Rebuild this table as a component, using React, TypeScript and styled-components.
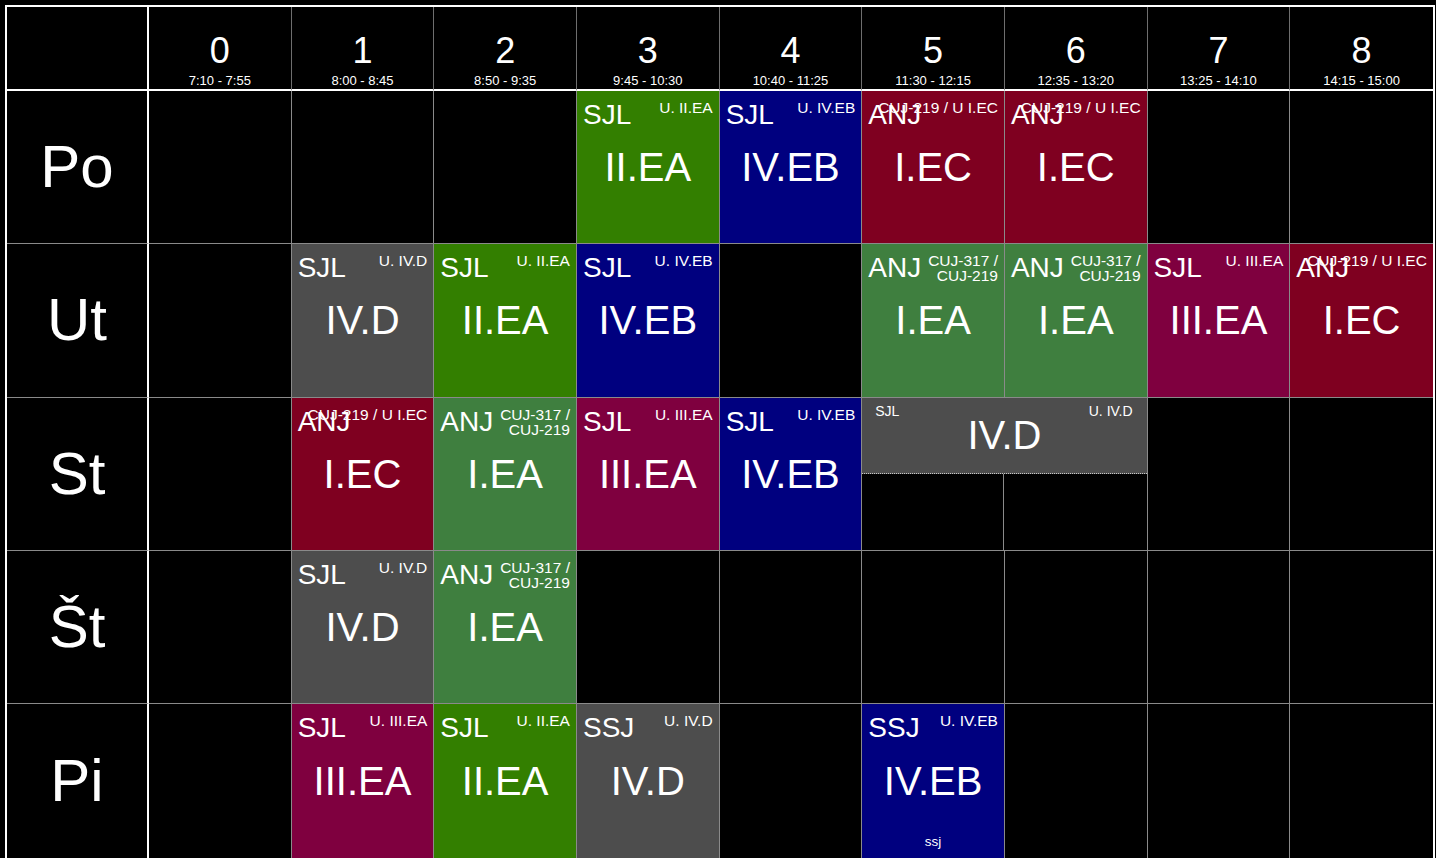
import React from "react";
import styled, { createGlobalStyle } from "styled-components";

const GlobalStyle = createGlobalStyle`
  html, body {
    margin: 0;
    padding: 0;
    background: #000;
    color: #fff;
    font-family: "Liberation Sans", Arial, sans-serif;
    overflow: hidden;
  }
`;

const LINE = "#8a8a8a";
const HEAD_LINE = "#6e6e6e";

const Table = styled.div`
  margin: 5px 0 0 5px;
  display: grid;
  grid-template-columns: 142px repeat(9, 142.67px);
  grid-template-rows: 84px repeat(5, 153.33px);
  border: 2px solid #fff;
  width: max-content;
  box-sizing: border-box;
`;

const Corner = styled.div`
  box-sizing: border-box;
  border-right: 2px solid #fff;
  border-bottom: 2px solid #fff;
`;

const HeadCell = styled.div<{ $last?: boolean }>`
  box-sizing: border-box;
  border-bottom: 2px solid #fff;
  border-right: ${(p) => (p.$last ? "none" : `1px solid ${HEAD_LINE}`)};
  display: flex;
  flex-direction: column;
  align-items: center;
  justify-content: flex-end;
  gap: 5px;
  padding-bottom: 2px;
`;

const PeriodNum = styled.div`
  font-size: 36px;
  line-height: 1;
`;

const PeriodTime = styled.div`
  font-size: 13px;
  line-height: 1;
`;

const DayCell = styled.div<{ $lastRow?: boolean }>`
  box-sizing: border-box;
  border-right: 2px solid #fff;
  border-bottom: ${(p) => (p.$lastRow ? "none" : `1px solid ${LINE}`)};
  display: flex;
  align-items: center;
  justify-content: center;
  font-size: 60px;
  line-height: 1;
`;

const Cell = styled.div<{ $lastCol?: boolean; $lastRow?: boolean; $span?: number }>`
  box-sizing: border-box;
  min-width: 0;
  border-right: ${(p) => (p.$lastCol ? "none" : `1px solid ${LINE}`)};
  border-bottom: ${(p) => (p.$lastRow ? "none" : `1px solid ${LINE}`)};
  grid-column: span ${(p) => p.$span ?? 1};
  display: grid;
`;

const SplitCell = styled(Cell)`
  grid-template-columns: 1fr 1fr;
  grid-template-rows: 1fr 1fr;
`;

const SubCell = styled.div<{ $divider?: boolean }>`
  border-right: ${(p) => (p.$divider ? `1px solid ${LINE}` : "none")};
`;

const LessonBox = styled.div<{ $bg: string; $half?: boolean }>`
  background: ${(p) => p.$bg};
  display: grid;
  grid-template: 1fr / 1fr;
  min-width: 0;
  grid-column: ${(p) => (p.$half ? "1 / -1" : "auto")};
  border-bottom: ${(p) => (p.$half ? "1px dotted #c8c8c8" : "none")};
  box-sizing: border-box;
`;

const Subject = styled.div<{ $small?: boolean }>`
  grid-area: 1 / 1;
  align-self: start;
  justify-self: start;
  margin: ${(p) => (p.$small ? "6px 0 0 13px" : "10px 0 0 6px")};
  font-size: ${(p) => (p.$small ? "14px" : "28px")};
  line-height: 1;
  white-space: nowrap;
`;

const Room = styled.div<{ $small?: boolean }>`
  grid-area: 1 / 1;
  align-self: start;
  justify-self: end;
  margin: ${(p) => (p.$small ? "6px 14px 0 0" : "9px 6px 0 0")};
  font-size: ${(p) => (p.$small ? "14px" : "15.5px")};
  line-height: ${(p) => (p.$small ? "14px" : "15px")};
  text-align: right;
  max-width: 126px;
`;

const Word = styled.span`
  white-space: nowrap;
`;

const ClassName = styled.div`
  grid-area: 1 / 1;
  align-self: center;
  justify-self: center;
  font-size: 40px;
  line-height: 1;
  white-space: nowrap;
`;

const Note = styled.div`
  grid-area: 1 / 1;
  align-self: end;
  justify-self: center;
  margin-bottom: 9px;
  font-size: 13.5px;
  line-height: 1;
`;

type Lesson = { subj: string; cls: string; room: string; bg: string; note?: string };
type Slot = null | { lesson: Lesson; split?: boolean };

const COL = {
  green: "#337f00",
  navy: "#00007f",
  red: "#7f0020",
  gray: "#4d4d4d",
  sea: "#3f7f3f",
  plum: "#7f003f",
};

const L = {
  sjlIIEA: { subj: "SJL", cls: "II.EA", room: "U. II.EA", bg: COL.green },
  sjlIVEB: { subj: "SJL", cls: "IV.EB", room: "U. IV.EB", bg: COL.navy },
  anjIEC: { subj: "ANJ", cls: "I.EC", room: "CUJ-219 / U I.EC", bg: COL.red },
  sjlIVD: { subj: "SJL", cls: "IV.D", room: "U. IV.D", bg: COL.gray },
  anjIEA: { subj: "ANJ", cls: "I.EA", room: "CUJ-317 / CUJ-219", bg: COL.sea },
  sjlIIIEA: { subj: "SJL", cls: "III.EA", room: "U. III.EA", bg: COL.plum },
  ssjIVD: { subj: "SSJ", cls: "IV.D", room: "U. IV.D", bg: COL.gray },
  ssjIVEB: { subj: "SSJ", cls: "IV.EB", room: "U. IV.EB", bg: COL.navy, note: "ssj" },
};

const periods = [
  ["0", "7:10 - 7:55"],
  ["1", "8:00 - 8:45"],
  ["2", "8:50 - 9:35"],
  ["3", "9:45 - 10:30"],
  ["4", "10:40 - 11:25"],
  ["5", "11:30 - 12:15"],
  ["6", "12:35 - 13:20"],
  ["7", "13:25 - 14:10"],
  ["8", "14:15 - 15:00"],
];

const s = (lesson: Lesson): Slot => ({ lesson });

const days: { name: string; slots: Slot[] }[] = [
  {
    name: "Po",
    slots: [null, null, null, s(L.sjlIIEA), s(L.sjlIVEB), s(L.anjIEC), s(L.anjIEC), null, null],
  },
  {
    name: "Ut",
    slots: [null, s(L.sjlIVD), s(L.sjlIIEA), s(L.sjlIVEB), null, s(L.anjIEA), s(L.anjIEA), s(L.sjlIIIEA), s(L.anjIEC)],
  },
  {
    name: "St",
    slots: [null, s(L.anjIEC), s(L.anjIEA), s(L.sjlIIIEA), s(L.sjlIVEB), { lesson: L.sjlIVD, split: true }, null, null],
  },
  {
    name: "Št",
    slots: [null, s(L.sjlIVD), s(L.anjIEA), null, null, null, null, null, null],
  },
  {
    name: "Pi",
    slots: [null, s(L.sjlIIIEA), s(L.sjlIIEA), s(L.ssjIVD), null, s(L.ssjIVEB), null, null, null],
  },
];

function RoomText({ text }: { text: string }) {
  const words = text.split(" ");
  return (
    <>
      {words.map((w, i) => (
        <React.Fragment key={i}>
          <Word>{w}</Word>
          {i < words.length - 1 ? " " : null}
        </React.Fragment>
      ))}
    </>
  );
}

function LessonView({ lesson, half }: { lesson: Lesson; half?: boolean }) {
  return (
    <LessonBox $bg={lesson.bg} $half={half}>
      <Subject $small={half}>{lesson.subj}</Subject>
      <ClassName>{lesson.cls}</ClassName>
      <Room $small={half}>
        <RoomText text={lesson.room} />
      </Room>
      {lesson.note && <Note>{lesson.note}</Note>}
    </LessonBox>
  );
}

export default function App() {
  return (
    <>
      <GlobalStyle />
      <Table>
        <Corner />
        {periods.map(([n, t], i) => (
          <HeadCell key={n} $last={i === periods.length - 1}>
            <PeriodNum>{n}</PeriodNum>
            <PeriodTime>{t}</PeriodTime>
          </HeadCell>
        ))}
        {days.map((day, di) => {
          const lastRow = di === days.length - 1;
          let col = 0;
          return (
            <React.Fragment key={day.name}>
              <DayCell $lastRow={lastRow}>{day.name}</DayCell>
              {day.slots.map((slot, si) => {
                const span = slot?.split ? 2 : 1;
                col += span;
                const lastCol = col === 9;
                if (slot?.split) {
                  return (
                    <SplitCell key={si} $span={2} $lastCol={lastCol} $lastRow={lastRow}>
                      <LessonView lesson={slot.lesson} half />
                      <SubCell $divider />
                      <SubCell />
                    </SplitCell>
                  );
                }
                return (
                  <Cell key={si} $lastCol={lastCol} $lastRow={lastRow}>
                    {slot && <LessonView lesson={slot.lesson} />}
                  </Cell>
                );
              })}
            </React.Fragment>
          );
        })}
      </Table>
    </>
  );
}
